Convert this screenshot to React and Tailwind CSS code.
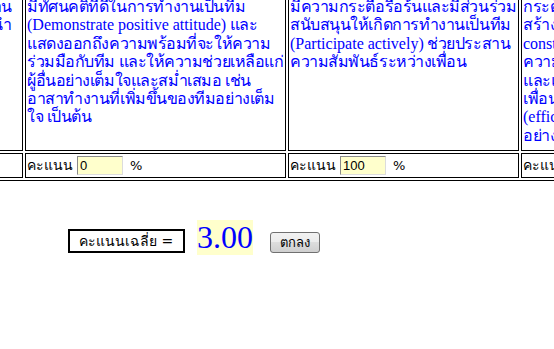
import React from 'react';

const cell = "border border-black px-px pt-px text-[16px] leading-[18.4px] text-[#0000ff] overflow-hidden whitespace-nowrap tracking-[-0.45px]";
const scoreCell = "border border-black px-px flex items-center text-[14px] text-black font-['Tahoma','DejaVu_Sans','Liberation_Sans',sans-serif] whitespace-nowrap overflow-hidden";
const en = "tracking-normal";

const ScoreInput = ({ value }) => (
  <input
    readOnly
    defaultValue={value}
    className="w-[46px] h-[19px] px-[2px] bg-[#ffffcc] border border-[#8a8a8a] border-r-[#dcdcdc] border-b-[#dcdcdc] text-[13px] text-black font-['Liberation_Sans',sans-serif] outline-none"
  />
);

const Score = ({ value }) => (
  <div className={scoreCell}>
    <span className="w-[50px] shrink-0">คะแนน</span>
    <ScoreInput value={value} />
    <span className="ml-[7px] text-[13px]">%</span>
  </div>
);

export default function App() {
  return (
    <div className="w-[554px] h-[349px] overflow-hidden bg-white font-['Liberation_Serif',serif]">
      {/* table */}
      <div className="grid grid-cols-[222px_261px_231px_260px] grid-rows-[155px_25px] gap-[2px] p-[2px] border border-black w-max -ml-[202px] -mt-[7px]">
        <div className={cell + " text-right pr-[10px]"}>
          ความรับผิดชอบในการทำงาน<br />
          ให้สำเร็จและนำ
        </div>
        <div className={cell}>
          มีทัศนคติที่ดีในการทำงานเป็นทีม<br />
          <span className={en}>(Demonstrate positive attitude)</span> และ<br />
          แสดงออกถึงความพร้อมที่จะให้ความ<br />
          ร่วมมือกับทีม และให้ความช่วยเหลือแก่<br />
          ผู้อื่นอย่างเต็มใจและสม่ำเสมอ เช่น<br />
          อาสาทำงานที่เพิ่มขึ้นของทีมอย่างเต็ม<br />
          ใจ เป็นต้น
        </div>
        <div className={cell}>
          มีความกระตือรือร้นและมีส่วนร่วม<br />
          สนับสนุนให้เกิดการทำงานเป็นทีม<br />
          <span className={en}>(Participate actively)</span> ช่วยประสาน<br />
          ความสัมพันธ์ระหว่างเพื่อน
        </div>
        <div className={cell}>
          กระตุ้นและส่งเสริมให้ทีม<br />
          สร้างสรรค์ผลงาน <span className={en}>(Be</span><br />
          <span className={en}>constructive)</span> เสนอ<br />
          ความคิดเห็นที่เป็นประโยชน์<br />
          และแก้ปัญหาร่วมกับ<br />
          เพื่อนร่วมงานอย่างมี<br />
          <span className={en}>(efficiency)</span> ประสิทธิภาพ<br />
          อย่างต่อเนื่อง
        </div>

        <div className="border border-black" />
        <Score value="0" />
        <Score value="100" />
        <Score value="" />
      </div>

      {/* average */}
      <div className="flex items-start mt-[39px] ml-[68px]">
        <div className="mt-[9px] w-[117px] h-[24px] border-2 border-black flex items-center pl-[9px] text-[14px] text-black font-['Tahoma','DejaVu_Sans','Liberation_Sans',sans-serif] whitespace-nowrap">
          คะแนนเฉลี่ย =
        </div>
        <span className="ml-[12px] h-[35px] w-[56px] bg-[#ffffcc] text-[32px] leading-[35px] text-[#0000ff]">
          3.00
        </span>
        <button className="ml-[17px] mt-[12px] w-[50px] h-[21px] rounded-[3px] border border-[#707070] bg-[linear-gradient(#f2f2f2,#ebebeb_50%,#dddddd_50%,#cfcfcf)] text-[13px] text-black font-['Tahoma','DejaVu_Sans','Liberation_Sans',sans-serif] leading-none">
          ตกลง
        </button>
      </div>
    </div>
  );
}
